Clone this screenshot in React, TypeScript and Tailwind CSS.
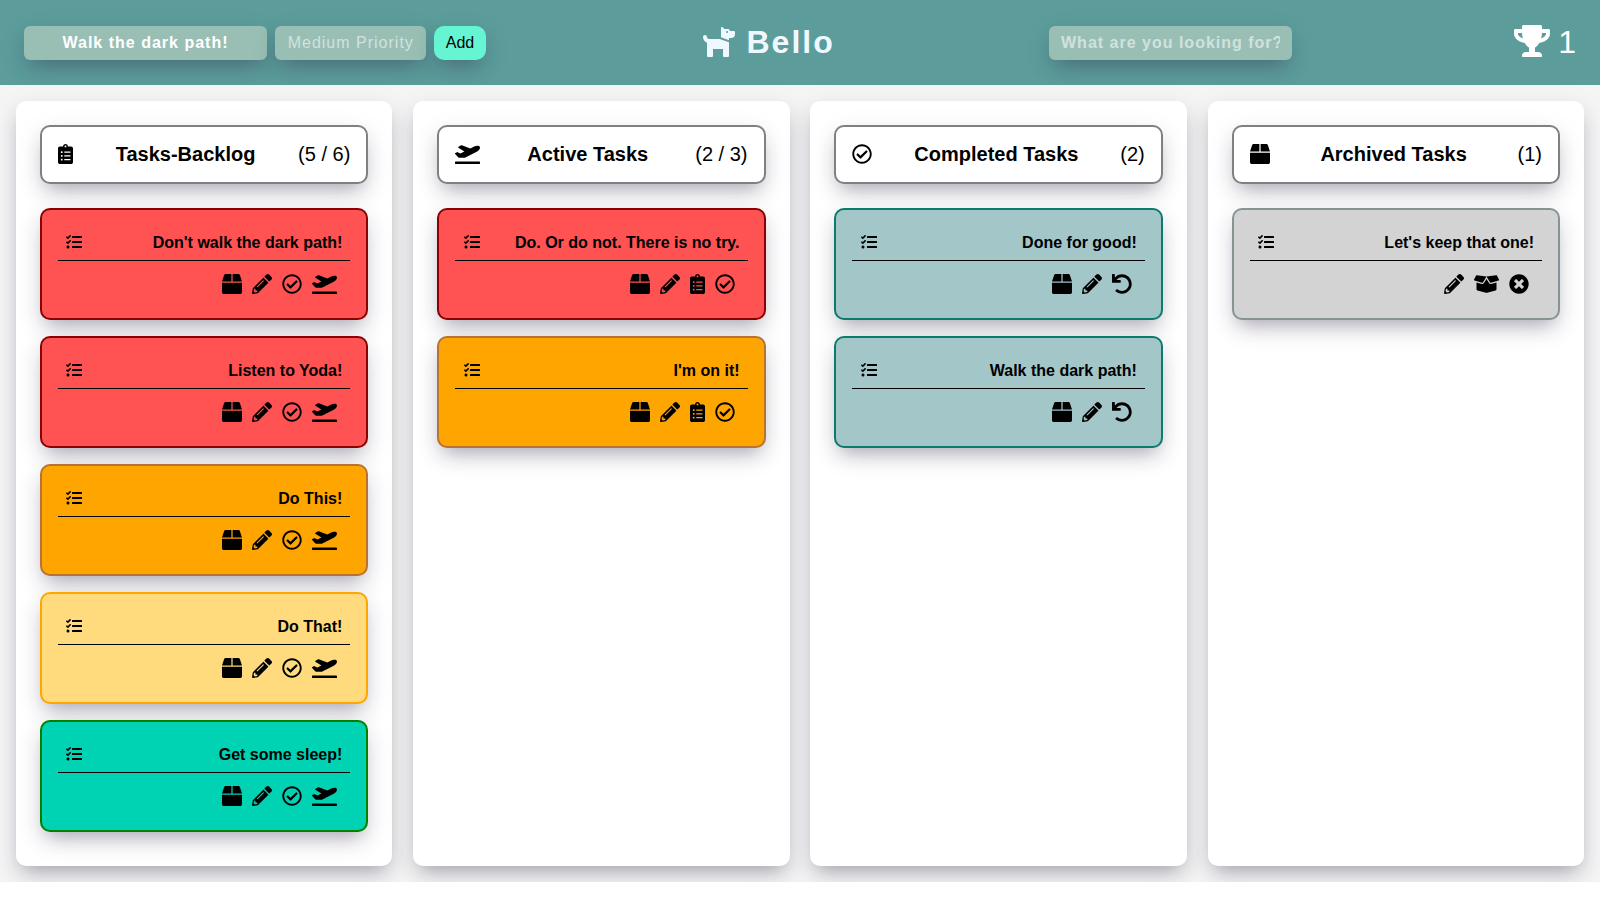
import type { IconType } from "react-icons";
import {
  FaBox,
  FaBoxOpen,
  FaClipboardList,
  FaDog,
  FaPencilAlt,
  FaPlaneDeparture,
  FaRegCheckCircle,
  FaTasks,
  FaTimesCircle,
  FaTrophy,
  FaUndo,
} from "react-icons/fa";

type IconDef = { Icon: IconType; size: string };

const box: IconDef = { Icon: FaBox, size: "h-5 w-5" };
const pencil: IconDef = { Icon: FaPencilAlt, size: "h-5 w-5" };
const check: IconDef = { Icon: FaRegCheckCircle, size: "h-5 w-5" };
const plane: IconDef = { Icon: FaPlaneDeparture, size: "h-5 w-[25px]" };
const clipboard: IconDef = { Icon: FaClipboardList, size: "h-5 w-[15px]" };
const undo: IconDef = { Icon: FaUndo, size: "h-5 w-5" };
const boxOpen: IconDef = { Icon: FaBoxOpen, size: "h-5 w-[25px]" };
const remove: IconDef = { Icon: FaTimesCircle, size: "h-5 w-5" };

const shadow =
  "shadow-[0_10px_20px_-6px_rgba(45,35,66,0.38),0_8px_30px_rgba(45,35,66,0.08)]";

const tones = {
  red: "bg-[#ff5252] border-[#8b0000]",
  orange: "bg-[#ffa500] border-[#b87333]",
  yellow: "bg-[#ffdb7e] border-[#ffa500]",
  green: "bg-[#00d2b4] border-[#008000]",
  done: "bg-[#a3c6c8] border-[#0b7b6b]",
  archived: "bg-[#d3d3d3] border-[#869496]",
};

type Task = { title: string; tone: keyof typeof tones };
type Column = { title: string; count: string; icon: IconDef; actions: IconDef[]; tasks: Task[] };

const columns: Column[] = [
  {
    title: "Tasks-Backlog",
    count: "(5 / 6)",
    icon: clipboard,
    actions: [box, pencil, check, plane],
    tasks: [
      { title: "Don't walk the dark path!", tone: "red" },
      { title: "Listen to Yoda!", tone: "red" },
      { title: "Do This!", tone: "orange" },
      { title: "Do That!", tone: "yellow" },
      { title: "Get some sleep!", tone: "green" },
    ],
  },
  {
    title: "Active Tasks",
    count: "(2 / 3)",
    icon: plane,
    actions: [box, pencil, clipboard, check],
    tasks: [
      { title: "Do. Or do not. There is no try.", tone: "red" },
      { title: "I'm on it!", tone: "orange" },
    ],
  },
  {
    title: "Completed Tasks",
    count: "(2)",
    icon: check,
    actions: [box, pencil, undo],
    tasks: [
      { title: "Done for good!", tone: "done" },
      { title: "Walk the dark path!", tone: "done" },
    ],
  },
  {
    title: "Archived Tasks",
    count: "(1)",
    icon: box,
    actions: [pencil, boxOpen, remove],
    tasks: [{ title: "Let's keep that one!", tone: "archived" }],
  },
];

function TaskCard({ task, actions }: { task: Task; actions: IconDef[] }) {
  return (
    <article className={`h-28 rounded-[10px] border-2 p-4 ${tones[task.tone]} ${shadow}`}>
      <div className="flex items-center justify-between border-b border-black p-2 text-base leading-[18px]">
        <FaTasks className="-mt-0.5 ml-[0.4px] h-4 w-4" />
        <h3 className="font-bold">{task.title}</h3>
      </div>
      <div className="flex justify-end gap-2.5 pt-[13px] pr-[13px]">
        {actions.map(({ Icon, size }, i) => (
          <button key={i} type="button">
            <Icon className={size} />
          </button>
        ))}
      </div>
    </article>
  );
}

function BoardColumn({ column }: { column: Column }) {
  const { Icon, size } = column.icon;
  return (
    <section className={`flex w-[24%] flex-col rounded-[10px] bg-white p-6 ${shadow}`}>
      <header
        className={`mb-6 flex h-[59px] items-center justify-between rounded-[10px] border-2 border-[#808080] bg-white px-4 text-xl leading-[23px] ${shadow}`}
      >
        <Icon className={`${size} -mt-0.5`} />
        <h2 className="font-bold">{column.title}</h2>
        <span>{column.count}</span>
      </header>
      <div className="flex flex-col gap-4">
        {column.tasks.map((task) => (
          <TaskCard key={task.title} task={task} actions={column.actions} />
        ))}
      </div>
    </section>
  );
}

export default function App() {
  const field =
    "h-[34px] rounded-md bg-[#99bfb5] text-base tracking-[1px] outline-none";
  return (
    <div className="flex h-[900px] flex-col bg-white font-['Liberation_Sans',Arial,sans-serif] text-black">
      <header className="flex h-[85px] shrink-0 items-center bg-[#5c9d9c] px-6 text-[#f0f8ff]">
        <div className="flex w-[677px] gap-2">
          <input
            className={`${field} w-[243px] px-3 text-center font-bold text-white ${shadow}`}
            defaultValue="Walk the dark path!"
          />
          <button
            type="button"
            className={`${field} w-[151px] pl-[12.7px] text-left whitespace-nowrap text-[#d1e2dd] ${shadow}`}
          >
            Medium Priority
          </button>
          <button
            type="button"
            className={`h-[34px] w-[52px] rounded-[10px] bg-[#66f5d2] text-base text-black ${shadow}`}
          >
            Add
          </button>
        </div>
        <div className="flex w-[348px] items-center gap-[9.5px] pb-[2px]">
          <FaDog className="mb-[2px] h-8 w-9" />
          <h1 className="text-[32px] leading-9 font-bold tracking-[2px]">Bello</h1>
        </div>
        <input
          className={`${field} w-[243px] px-3 text-center font-bold placeholder:text-[#d1e2dd] placeholder:opacity-100 ${shadow}`}
          placeholder="What are you looking for?"
        />
        <div className="ml-auto flex items-center gap-2 pb-[2px] text-[32px] leading-9 text-white">
          <FaTrophy className="mb-[2px] h-8 w-9" />
          <span>1</span>
        </div>
      </header>
      <main className="flex h-[797px] shrink-0 justify-between overflow-hidden bg-[#f5f5f5] p-4">
        {columns.map((column) => (
          <BoardColumn key={column.title} column={column} />
        ))}
      </main>
    </div>
  );
}
